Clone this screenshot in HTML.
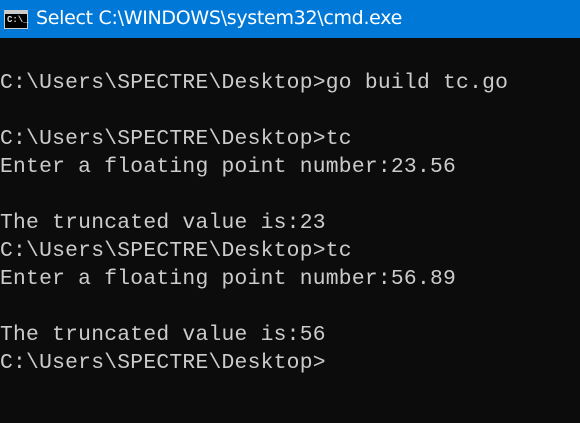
<!DOCTYPE html>
<html><head><style>
html,body{margin:0;padding:0;width:580px;height:423px;overflow:hidden;background:#0c0c0c;}
.t{position:absolute;left:0;top:0;width:580px;height:38px;background:#0078d7;}
.t span{position:absolute;left:36px;top:7px;color:#fff;font:19px "DejaVu Sans","Liberation Sans",sans-serif;letter-spacing:-0.3px;}
.ic{position:absolute;left:4px;top:10px;width:24px;height:19px;background:#000;border:1px solid #ccc;box-sizing:border-box;}
.ic:before{content:"";position:absolute;left:0;top:0;right:0;height:3px;background:#ccc;}
.ic b{position:absolute;left:2px;top:4px;color:#ddd;font:bold 9px "Liberation Mono",monospace;}
pre{position:absolute;left:0;top:69px;margin:0;color:#cccccc;font:21.3px/28px "Liberation Mono",monospace;letter-spacing:0.25px;}
</style></head><body>
<div class="t"><div class="ic"><b>C:\_</b></div><span>Select C:\WINDOWS\system32\cmd.exe</span></div>
<pre>C:\Users\SPECTRE\Desktop&gt;go build tc.go

C:\Users\SPECTRE\Desktop&gt;tc
Enter a floating point number:23.56

The truncated value is:23
C:\Users\SPECTRE\Desktop&gt;tc
Enter a floating point number:56.89

The truncated value is:56
C:\Users\SPECTRE\Desktop&gt;</pre>
</body></html>
